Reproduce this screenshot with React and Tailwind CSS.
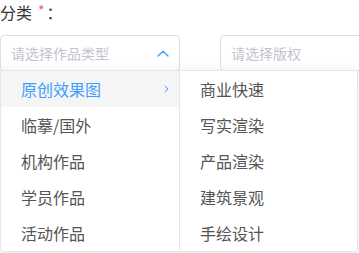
import React from 'react';

const typeOptions = ['原创效果图', '临摹/国外', '机构作品', '学员作品', '活动作品'];
const subOptions = ['商业快速', '写实渲染', '产品渲染', '建筑景观', '手绘设计'];

const ChevronUp = () => (
  <svg width="12" height="7" viewBox="0 0 12 7" fill="none">
    <path d="M1 6L6 1.2L11 6" stroke="#409eff" strokeWidth="1.4" strokeLinecap="round" strokeLinejoin="round" />
  </svg>
);

const ChevronRight = () => (
  <svg width="5" height="8" viewBox="0 0 5 8" fill="none">
    <path d="M1 1L4 4L1 7" stroke="#409eff" strokeWidth="1" strokeLinecap="round" strokeLinejoin="round" />
  </svg>
);

export default function App() {
  return (
    <div
      className="w-[359px] h-[253px] overflow-hidden bg-white text-[#606266]"
      style={{ fontFamily: '"Noto Sans CJK SC", "Noto Sans", sans-serif' }}
    >
      <div className="flex items-center h-6 text-[16px] text-[#333]">
        <span>分类</span>
        <span className="ml-[6px] text-[14px] text-[#f5576c] -mt-[3px]">*</span>
        <span className="ml-[2px]">：</span>
      </div>

      <div className="flex gap-10 mt-[11px]">
        <div className="w-[180px] h-[36px] shrink-0 border border-[#dcdfe6] rounded-[4px] flex items-center justify-between pl-[10px] pr-[10px]">
          <span className="text-[14px] text-[#c0c4cc]">请选择作品类型</span>
          <ChevronUp />
        </div>
        <div className="w-[180px] h-[36px] shrink-0 border border-[#dcdfe6] rounded-[4px] flex items-center pl-[10px]">
          <span className="text-[14px] text-[#c0c4cc]">请选择版权</span>
        </div>
      </div>

      <div className="relative -mt-px w-[358px] flex bg-white border border-[#e4e7ed] rounded-b-[4px] shadow-[0_2px_12px_rgba(0,0,0,0.1)]">
        <div className="w-[179px] border-r border-[#e4e7ed]">
          {typeOptions.map((item, i) => (
            <div
              key={item}
              className={
                i === 0
                  ? 'h-[36px] flex items-center justify-between pl-5 pr-[10px] text-[16px] bg-[#f5f5f5] text-[#409eff]'
                  : 'h-[36px] flex items-center pl-5 text-[16px] text-[#555]'
              }
            >
              <span>{item}</span>
              {i === 0 && <ChevronRight />}
            </div>
          ))}
        </div>
        <div className="flex-1">
          {subOptions.map((item) => (
            <div key={item} className="h-[36px] flex items-center pl-5 text-[16px] text-[#555]">
              {item}
            </div>
          ))}
        </div>
      </div>
    </div>
  );
}
